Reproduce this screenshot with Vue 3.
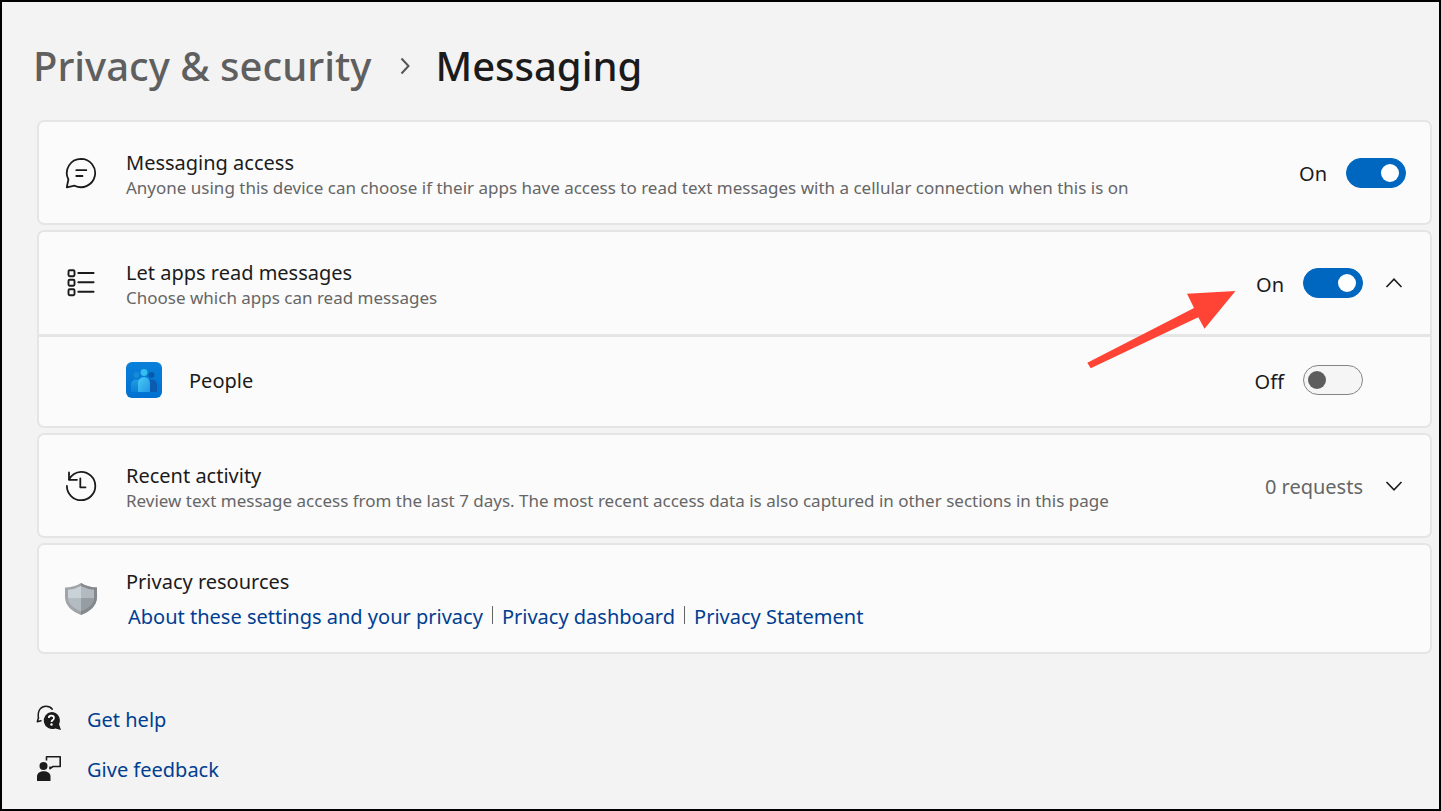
<script setup>
import { ref } from 'vue'

const accessOn = ref(true)
const appsOn = ref(true)
const peopleOn = ref(false)
const stateText = (on) => (on ? 'On' : 'Off')
</script>

<template>
  <main class="page">
    <h1 class="crumbs">
      <a href="#privacy">Privacy &amp; security</a>
      <svg width="12" height="18" viewBox="0 0 12 18" aria-hidden="true"><path d="M2.5 1.5 9.5 9 2.5 16.5" fill="none" stroke="#555" stroke-width="2" /></svg>
      <span>Messaging</span>
    </h1>

    <div class="cards">
      <section class="card row">
        <svg class="icon" viewBox="0 0 32 32" aria-hidden="true">
          <g fill="none" stroke="#1b1b1b" stroke-width="1.8" stroke-linecap="round" stroke-linejoin="round">
            <path d="M16 1.8a14.2 14.2 0 1 1-6.4 26.9L1.8 30.3 3.4 22.5A14.2 14.2 0 0 1 16 1.8Z" />
            <path d="M11.3 13.2h10M11.3 19h6.2" />
          </g>
        </svg>
        <div class="text">
          <label class="name" for="access">Messaging access</label>
          <p>Anyone using this device can choose if their apps have access to read text messages with a cellular connection when this is on</p>
        </div>
        <span class="state">{{ stateText(accessOn) }}</span>
        <input id="access" v-model="accessOn" class="switch" type="checkbox" role="switch">
      </section>

      <section class="card">
        <div class="row head">
          <svg class="icon" viewBox="0 0 32 32" aria-hidden="true">
            <g fill="none" stroke="#1b1b1b" stroke-width="1.9" stroke-linecap="round">
              <rect x="3.5" y="3.3" width="6" height="6" rx="1.2" />
              <rect x="3.5" y="12.8" width="6" height="6" rx="1.2" />
              <rect x="3.5" y="22.3" width="6" height="6" rx="1.2" />
              <path d="M13.3 6h15.3M13.3 15.3h15.3M13.3 24.8h15.3" />
            </g>
          </svg>
          <div class="text">
            <label class="name" for="apps">Let apps read messages</label>
            <p>Choose which apps can read messages</p>
          </div>
          <span class="state">{{ stateText(appsOn) }}</span>
          <input id="apps" v-model="appsOn" class="switch" type="checkbox" role="switch">
          <button class="chevron" type="button" aria-label="Collapse">
            <svg width="18" height="12" viewBox="0 0 18 12"><path d="M1.5 10 9 2.2 16.5 10" fill="none" stroke="#1b1b1b" stroke-width="1.6" /></svg>
          </button>
        </div>
        <div class="row app">
          <svg class="app-icon" viewBox="0 0 36 36" aria-hidden="true">
            <defs>
              <linearGradient id="tile" x1="0" y1="0" x2="0" y2="1"><stop offset="0" stop-color="#0a80da" /><stop offset="1" stop-color="#0071d0" /></linearGradient>
              <linearGradient id="person" x1="0" y1="0" x2="1" y2="1"><stop offset="0" stop-color="#4ccbf5" /><stop offset="1" stop-color="#2097e6" /></linearGradient>
              <linearGradient id="left" x1="0" y1="0" x2="0" y2="1"><stop offset="0" stop-color="#1f9ce0" /><stop offset="1" stop-color="#0b7fd8" /></linearGradient>
            </defs>
            <rect width="36" height="36" rx="6" fill="url(#tile)" />
            <circle cx="10.5" cy="13" r="3" fill="#168bd3" />
            <path d="M5 30v-7.500a5 5 0 0 1 5-5h3V30Z" fill="url(#left)" />
            <circle cx="25.500" cy="13" r="3" fill="#075aa8" />
            <path d="M31 30v-7.500a5 5 0 0 0-5-5h-3V30Z" fill="#0b5cb0" />
            <circle cx="18" cy="10.500" r="3.400" fill="#35bdf0" />
            <path d="M12 30v-9a6 6 0 0 1 12 0v9Z" fill="url(#person)" />
          </svg>
          <label class="name app-name" for="people">People</label>
          <span class="state">{{ stateText(peopleOn) }}</span>
          <input id="people" v-model="peopleOn" class="switch" type="checkbox" role="switch">
        </div>
        <svg class="arrow" viewBox="0 0 150 80" aria-hidden="true">
          <path d="M.3 72.700 107 18 100 3.700 148.500 1 117.500 38.700 111.300 27.300 3.700 78.300Z" fill="#ff4436" />
        </svg>
      </section>

      <section class="card row">
        <svg class="icon" viewBox="0 0 32 32" aria-hidden="true">
          <g fill="none" stroke="#1b1b1b" stroke-width="1.8" stroke-linecap="round" stroke-linejoin="round">
            <path d="M1.900 16A14.200 14.200 0 1 0 16 1.800 14.200 14.200 0 0 0 4.200 9.300" />
            <path d="M4 2.500v7.300h8" />
            <path d="M15.300 8.300v9h5.200" />
          </g>
        </svg>
        <div class="text">
          <h2 class="name">Recent activity</h2>
          <p>Review text message access from the last 7 days. The most recent access data is also captured in other sections in this page</p>
        </div>
        <span class="state muted">0 requests</span>
        <button class="chevron" type="button" aria-label="Expand">
          <svg width="18" height="12" viewBox="0 0 18 12"><path d="M1.500 2 9 9.800 16.500 2" fill="none" stroke="#1b1b1b" stroke-width="1.6" /></svg>
        </button>
      </section>

      <section class="card row resources">
        <svg class="icon" viewBox="0 0 32 32" aria-hidden="true">
          <path d="M16 0Q23 4.300 32 4.500V14C32 22.500 25 28.500 16 32 7 28.500 0 22.500 0 14V4.500Q9 4.300 16 0Z" fill="#a0a4a8" />
          <path d="M16 0Q23 4.300 32 4.500V14C32 22.500 25 28.500 16 32Z" fill="#85898d" />
          <path d="M16 3Q9.500 6.300 3 6.800V15H16Z" fill="#c9d2d8" />
          <path d="M16 3Q22.500 6.300 29 6.800V15H16Z" fill="#b2bac0" />
          <path d="M3 15H16V28.500C9 25.500 3.200 21.500 3 15Z" fill="#b4bcc2" />
          <path d="M29 15H16V28.500C23 25.500 28.800 21.500 29 15Z" fill="#969da3" />
        </svg>
        <div class="text">
          <h2 class="name">Privacy resources</h2>
          <nav class="links" aria-label="Privacy resources">
            <a href="#about">About these settings and your privacy</a>
            <a href="#dashboard">Privacy dashboard</a>
            <a href="#statement">Privacy Statement</a>
          </nav>
        </div>
      </section>
    </div>

    <footer class="support">
      <a href="#help">
        <svg width="26" height="26" viewBox="1 2 26 26" aria-hidden="true">
          <path d="M2.500 13.500C1 5 5.500 1.200 10 1.200c3 0 5 1.200 6.300 3M2.500 12.500 1.300 16.800 5 15.800" fill="none" stroke="#1b1b1b" stroke-width="1.500" stroke-linecap="round" stroke-linejoin="round" />
          <path d="M15.500 7a8.500 8.500 0 0 1 7.500 12.300L25 25l-5.700-1.600A8.500 8.500 0 1 1 15.500 7Z" fill="#1b1b1b" />
          <path d="M12.800 13c0-3.300 5.200-3.300 5.200 0 0 2-2.500 2-2.500 4.100" fill="none" stroke="#fff" stroke-width="1.700" />
          <circle cx="15.500" cy="19.500" r="1.200" fill="#fff" />
        </svg>
        Get help
      </a>
      <a href="#feedback">
        <svg width="26" height="26" viewBox="1 2 26 26" aria-hidden="true">
          <circle cx="7.500" cy="11" r="4" fill="#1b1b1b" />
          <path d="M1 26v-4.500c0-7 13.500-7 13.500 0V26Z" fill="#1b1b1b" />
          <path d="M10.500 5.500V1.800h13.700v9.700H17l-3 2.200v-2.200" fill="none" stroke="#1b1b1b" stroke-width="1.600" stroke-linejoin="round" />
        </svg>
        Give feedback
      </a>
    </footer>
  </main>
</template>

<style>
html, body, #app {
  height: 100%;
}
</style>

<style scoped>
.page {
  box-sizing: border-box;
  min-height: 100%;
  padding: 35px 7px 12px 35px;
  border: 2px solid #000;
  background: #f3f3f3;
  color: #1b1b1b;
  font: 20px/26px "Noto Sans", "Open Sans", sans-serif;
}
h1, h2, p {
  margin: 0;
}
a {
  color: #003e92;
  text-decoration: none;
}
.crumbs {
  display: flex;
  align-items: center;
  gap: 24px;
  margin: 0 0 25px -4px;
  font-size: 40px;
  line-height: 58px;
  font-weight: 500;
}
.crumbs a {
  margin-right: 4px;
  color: #5f5f5f;
}
.cards {
  display: flex;
  flex-direction: column;
  gap: 5px;
}
.card {
  position: relative;
  box-sizing: border-box;
  border: 2px solid #e5e5e5;
  border-radius: 7px;
  background: #fbfbfb;
}
.row {
  display: flex;
  align-items: center;
  box-sizing: border-box;
  min-height: 105px;
  padding: 0 24px 0 26px;
}
.head {
  border-bottom: 3px solid #e5e5e5;
}
.app {
  min-height: 89px;
  padding: 0 67px 3px 87px;
}
.resources {
  min-height: 111px;
}
.icon {
  flex: none;
  width: 32px;
  height: 32px;
  margin-right: 29px;
}
.text {
  flex: 1;
  padding-top: 4px;
}
.name {
  display: block;
  font-size: 20px;
  line-height: 26px;
  font-weight: 400;
}
.text p {
  color: #666;
  font-size: 17px;
  line-height: 24px;
}
.app-icon {
  flex: none;
  width: 36px;
  height: 36px;
  margin-right: 27px;
}
.app-name {
  flex: 1;
  padding-top: 2px;
}
.state {
  padding-top: 3px;
}
.muted {
  color: #666;
}
.switch {
  appearance: none;
  box-sizing: border-box;
  flex: none;
  width: 60px;
  height: 30px;
  margin: 0 0 0 19px;
  padding: 5px 6px 5px 4px;
  border: 1px solid #858585;
  border-radius: 15px;
  background: #f5f5f5;
}
.switch::before {
  content: "";
  display: block;
  width: 18px;
  height: 18px;
  border-radius: 50%;
  background: #5d5d5d;
}
.switch:checked {
  border-color: #0067c0;
  background: #0067c0;
}
.switch:checked::before {
  margin-left: auto;
  background: #fff;
}
.chevron {
  display: flex;
  justify-content: center;
  width: 24px;
  margin: 0 0 0 19px;
  padding: 4px 0;
  border: 0;
  background: none;
}
.chevron svg {
  flex: none;
}
.arrow {
  position: absolute;
  top: 58px;
  right: 193px;
  width: 150px;
  height: 80px;
}
.links {
  display: flex;
  margin: 6px 0 0 2px;
  line-height: 32px;
}
.links a + a::before {
  content: "";
  display: inline-block;
  width: 1px;
  height: 18px;
  margin: 0 9px;
  background: #666;
}
.support {
  display: flex;
  flex-direction: column;
  align-items: flex-start;
  gap: 18px;
  margin-top: 50px;
}
.support a {
  display: flex;
  align-items: center;
  gap: 24px;
  line-height: 32px;
}
.support svg {
  overflow: visible;
}
</style>
